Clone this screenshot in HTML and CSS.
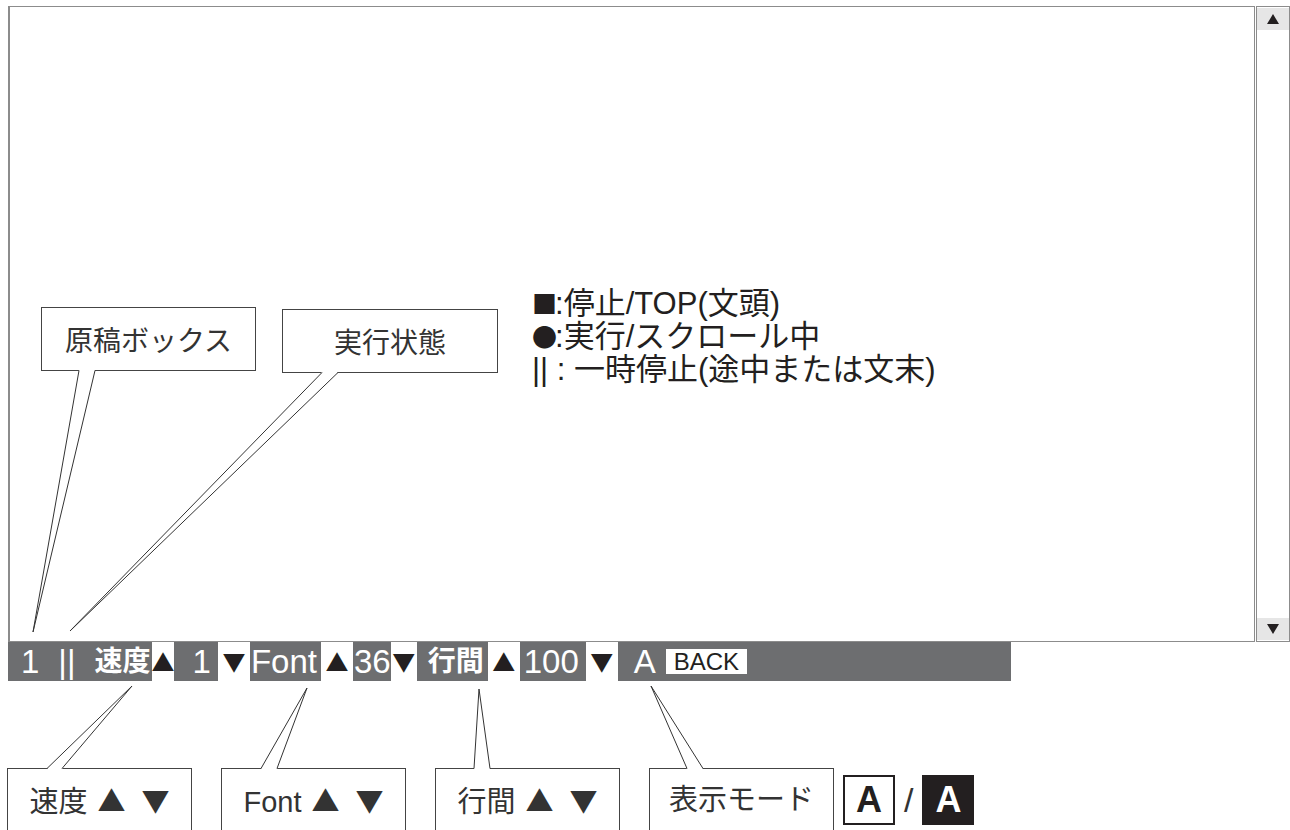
FILE: index.html
```html
<!DOCTYPE html>
<html lang="ja">
<head>
  <meta charset="UTF-8" />
  <meta name="viewport" content="width=device-width, initial-scale=1.0"/>
  <title>プロンプター 画面の説明</title>
  <link rel="stylesheet" href="styles.css">
</head>
<body>

  <div class="page">

    <div class="screen">
      <div class="editor">
        <div class="note">
          <div><span class="sym">■</span>:停止/TOP(文頭)</div>
          <div><span class="sym">●</span>:実行/スクロール中</div>
          <div>|| : 一時停止(途中または文末)</div>
        </div>
        <div class="callout callout-draft">原稿ボックス</div>
        <div class="callout callout-state">実行状態</div>
      </div>
      <div class="scrollbar">
        <div class="scroll-btn">
          <svg width="12" height="10" viewBox="0 0 12 10"><polygon points="6,0 12,10 0,10" /></svg>
        </div>
        <div class="scroll-btn">
          <svg width="12" height="10" viewBox="0 0 12 10"><polygon points="0,0 12,0 6,10" /></svg>
        </div>
      </div>
    </div>

    <div class="toolbar">
      <span class="tb-text">1</span>
      <span class="tb-text gap-xl">||</span>
      <span class="tb-text tb-jp gap-xl">速度</span>
      <span class="tb-btn btn-narrow gap-xs">▲</span>
      <span class="tb-text gap-xl">1</span>
      <span class="tb-btn gap-m">▼</span>
      <span class="tb-text gap-xs">Font</span>
      <span class="tb-btn gap-s">▲</span>
      <span class="tb-text gap-xs">36</span>
      <span class="tb-btn btn-mid">▼</span>
      <span class="tb-text tb-jp gap-l">行間</span>
      <span class="tb-btn gap-s">▲</span>
      <span class="tb-text gap-s">100</span>
      <span class="tb-btn gap-m">▼</span>
      <span class="tb-text gap-xl2">A</span>
      <span class="tb-back">BACK</span>
    </div>

    <div class="legend">
      <div class="label">速度<span class="sym up">▲</span><span class="sym down">▼</span></div>
      <div class="label">Font<span class="sym up">▲</span><span class="sym down">▼</span></div>
      <div class="label">行間<span class="sym up">▲</span><span class="sym down">▼</span></div>
      <div class="label">表示モード</div>
      <div class="mode-sample">
        <span class="mode-a">A</span>
        <span class="mode-sep">/</span>
        <span class="mode-a inverted">A</span>
      </div>
    </div>

    <!-- leader lines of the callouts -->
    <svg class="leaders" width="1290" height="830" viewBox="0 0 1290 830">
      <g class="leader">
        <polygon points="79,370 33,632 95,370" />
        <polyline points="79,370.5 33,632 95,370.5" />
      </g>
      <g class="leader">
        <polygon points="322,372 70,631 338,372" />
        <polyline points="322,372.5 70,631 338,372.5" />
      </g>
      <g class="leader">
        <polygon points="47,769 132,686 62,769" />
        <polyline points="47,768.5 132,686 62,768.5" />
      </g>
      <g class="leader">
        <polygon points="261,769 307,688 277,769" />
        <polyline points="261,768.5 307,688 277,768.5" />
      </g>
      <g class="leader">
        <polygon points="474,769 479,689 490,769" />
        <polyline points="474,768.5 479,689 490,768.5" />
      </g>
      <g class="leader">
        <polygon points="687,769 651,686 703,769" />
        <polyline points="687,768.5 651,686 703,768.5" />
      </g>
    </svg>

  </div>

</body>
</html>
```

FILE: styles.css
```css
* {
  box-sizing: border-box;
}

body {
  margin: 0;
  font-family: "Liberation Sans", "Noto Sans CJK JP", sans-serif;
  color: #231f20;
  background: #fff;
  overflow: hidden;
}

.page {
  position: relative;
  width: 1290px;
  height: 830px;
  padding: 6px 0 0 8px;
}

.sym {
  font-family: "Noto Sans CJK JP", sans-serif;
}

/* text box + scrollbar */
.screen {
  display: flex;
  height: 636px;
}

.editor {
  position: relative;
  flex: 1;
  border: 1px solid #8c8c8c;
  border-left-width: 2px;
}

.scrollbar {
  width: 34px;
  margin-left: 1px;
  border: 1px solid #8c8c8c;
  padding: 1px 0;
  display: flex;
  flex-direction: column;
  justify-content: space-between;
}

.scroll-btn {
  height: 22px;
  background: #e6e6e6;
  display: flex;
  align-items: center;
  justify-content: center;
}

.scroll-btn polygon {
  fill: #231f20;
}

.note {
  position: absolute;
  left: 522px;
  top: 280px;
  font-size: 31px;
  line-height: 33px;
  white-space: nowrap;
}

.note .sym {
  display: inline-block;
  font-size: 25px;
  line-height: 25px;
  margin-right: -2px;
}

.callout {
  position: absolute;
  height: 64px;
  border: 1px solid #444;
  background: #fff;
  text-align: center;
  font-size: 28px;
  line-height: 36px;
  padding-top: 16px;
  color: #333;
}

.callout-draft {
  left: 31px;
  top: 300px;
  width: 215px;
}

.callout-state {
  left: 272px;
  top: 302px;
  width: 216px;
}

/* gray control bar */
.toolbar {
  display: flex;
  width: 1003px;
  height: 39px;
  padding-left: 13px;
  background: #6d6e70;
  color: #fff;
  font-size: 33px;
  line-height: 39px;
  white-space: nowrap;
}

.tb-jp {
  font-size: 28px;
  font-weight: bold;
}

.tb-btn {
  width: 32px;
  background: #fff;
  color: #231f20;
  text-align: center;
  font-family: "Noto Sans CJK JP", sans-serif;
  font-size: 23px;
}

.btn-narrow {
  width: 22px;
}

.btn-mid {
  width: 26px;
}

.gap-xs { margin-left: 1px; }
.gap-s { margin-left: 4px; }
.gap-m { margin-left: 7px; }
.gap-l { margin-left: 11px; }
.gap-xl { margin-left: 19px; }
.gap-xl2 { margin-left: 16px; }

.tb-back {
  align-self: center;
  height: 25px;
  margin-left: 10px;
  padding: 0 8px;
  background: #fff;
  color: #231f20;
  font-size: 24px;
  line-height: 26px;
}

/* callouts under the bar */
.legend {
  display: flex;
  gap: 29px;
  margin: 87px 0 0 -1px;
}

.label {
  width: 185px;
  height: 80px;
  border: 1px solid #444;
  text-align: center;
  font-size: 29px;
  line-height: 36px;
  padding-top: 13px;
  color: #333;
}

.label .sym {
  font-size: 28px;
}

.label .up {
  margin-left: 10px;
}

.label .down {
  margin-left: 16px;
}

.mode-sample {
  display: flex;
  align-items: center;
  height: 50px;
  margin: 7px 0 0 -20px;
}

.mode-a {
  width: 52px;
  height: 50px;
  border: 2px solid #231f20;
  text-align: center;
  font-size: 36px;
  font-weight: bold;
  line-height: 46px;
}

.mode-a.inverted {
  background: #231f20;
  color: #fff;
}

.mode-sep {
  margin: 0 9px;
  font-size: 34px;
  color: #333;
}

.leaders {
  position: absolute;
  left: 0;
  top: 0;
  pointer-events: none;
}

.leader polygon {
  fill: #fff;
}

.leader polyline {
  fill: none;
  stroke: #333;
  stroke-width: 1;
}
```
